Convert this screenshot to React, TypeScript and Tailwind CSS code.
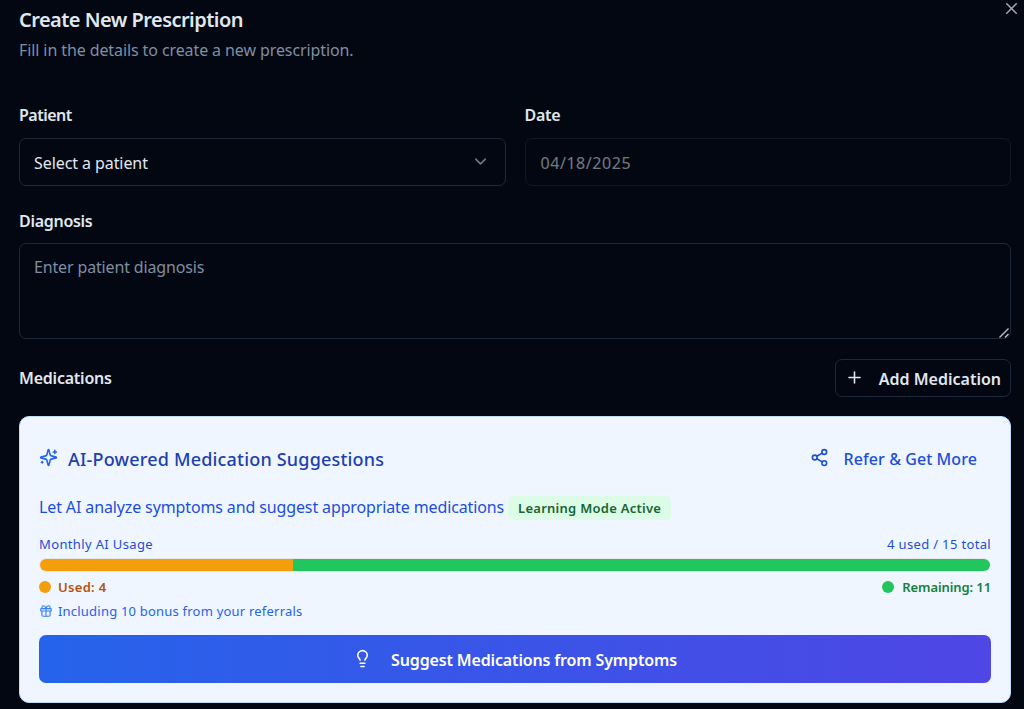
import { ChevronDown, Gift, Lightbulb, Plus, Share2, X } from "lucide-react";

function Sparkles({ className }: { className?: string }) {
  return (
    <svg viewBox="0 0 24 24" fill="none" stroke="currentColor" strokeWidth={2} strokeLinecap="round" strokeLinejoin="round" className={className}>
      <path d="M9.937 15.5A2 2 0 0 0 8.5 14.063l-6.135-1.582a.5.5 0 0 1 0-.962L8.5 9.936A2 2 0 0 0 9.937 8.5l1.582-6.135a.5.5 0 0 1 .963 0L14.063 8.5A2 2 0 0 0 15.5 9.937l6.135 1.581a.5.5 0 0 1 0 .964L15.5 14.063a2 2 0 0 0-1.437 1.437l-1.582 6.135a.5.5 0 0 1-.963 0z" />
      <path d="M20 3v4M22 5h-4M4 17v2M5 18H3" />
    </svg>
  );
}

const used = 4;
const total = 15;

function PrescriptionFields() {
  return (
    <>
      <div className="mt-[43px] grid grid-cols-2 gap-[19px]">
        <div>
          <div className="h-6 text-[16px] leading-6 font-semibold tracking-[-0.5px]">Patient</div>
          <button className="mt-[11px] flex h-12 w-full items-center justify-between rounded-[7px] border border-[#1d283a] pr-[15px] pl-[14px]">
            <span className="mt-[2px] text-[16px] leading-6 tracking-[-0.08px]">Select a patient</span>
            <ChevronDown className="mb-[2px] size-[19px] opacity-50" />
          </button>
        </div>
        <div>
          <div className="h-6 text-[16px] leading-6 font-semibold tracking-[-0.3px]">Date</div>
          <div className="mt-[11px] flex h-12 items-center rounded-[7px] border border-[#1d283a] px-[15px] opacity-50">
            <span className="mt-[2px] text-[16px] leading-6 tracking-[0.55px] text-[#e1e7ef]">04/18/2025</span>
          </div>
        </div>
      </div>
      <div className="mt-[23px] h-6 text-[16px] leading-6 font-semibold tracking-[-0.28px]">Diagnosis</div>
      <div className="relative mt-[10px] h-24">
        <textarea
          placeholder="Enter patient diagnosis"
          className="block h-24 w-full resize-none rounded-[7px] border border-[#1d283a] bg-transparent px-[14px] py-[11px] text-[16px] leading-6 tracking-[-0.15px] outline-none placeholder:text-[#7f8ea3]"
        />
        <svg viewBox="0 0 10 10" className="absolute right-[2px] bottom-[1px] size-[10px]" stroke="#c4c4c4" strokeWidth="1.4">
          <path d="M0.5 9.5 9.5 0.5M6 9.5 9.5 6" />
        </svg>
      </div>
    </>
  );
}

function UsageMeter() {
  return (
    <>
      <div className="mt-[15px] flex h-5 items-center justify-between text-[13px] text-[#1d4ed8]">
        <span className="tracking-[0.36px]">Monthly AI Usage</span>
        <span className="tracking-[0.34px]">{used} used / {total} total</span>
      </div>
      <div className="mt-[3px] flex h-[14px] overflow-hidden rounded-full border border-[#e5e7eb]">
        <div className="bg-[#f59e0b]" style={{ width: `${(used / total) * 100}%` }} />
        <div className="flex-1 bg-[#22c55e]" />
      </div>
      <div className="mt-[5px] flex h-5 items-center justify-between text-[13px] font-semibold">
        <div className="flex items-center gap-[7px] text-[#b45309]">
          <span className="size-3 rounded-full bg-[#f59e0b]" />
          <span className="mt-[2px] tracking-[0.3px]">Used: {used}</span>
        </div>
        <div className="flex items-center gap-2 text-[#15803d]">
          <span className="size-3 rounded-full bg-[#22c55e]" />
          <span className="mt-[2px] tracking-[-0.1px]">Remaining: {total - used}</span>
        </div>
      </div>
      <div className="mt-1 flex h-5 items-center gap-[5px] text-[13px] text-[#2563eb]">
        <Gift className="size-[14px] text-[#3b82f6]" />
        <span className="mt-[2px] tracking-[0.21px]">Including 10 bonus from your referrals</span>
      </div>
    </>
  );
}

function SuggestionCard() {
  return (
    <section className="mt-[19px] h-[287px] rounded-[10px] border border-[#bfdbfe] bg-[#eff6ff] px-[19px] pt-[23px]">
      <div className="flex h-[38px] items-center justify-between">
        <div className="flex items-center text-[#1e40af]">
          <Sparkles className="mb-[3px] size-[19px] text-[#2563eb]" />
          <span className="ml-[10px] text-[18px] leading-6 font-medium tracking-[0.19px]">AI-Powered Medication Suggestions</span>
        </div>
        <button className="mr-[14px] flex items-center text-[#1d4ed8]">
          <Share2 className="mb-[3px] size-[19px]" />
          <span className="ml-[15px] text-[16px] leading-6 font-medium tracking-[0.07px]">Refer &amp; Get More</span>
        </button>
      </div>
      <div className="mt-[18px] flex h-6 items-center">
        <span className="mb-[2px] text-[16px] leading-6 tracking-[-0.125px] text-[#1d4ed8]">Let AI analyze symptoms and suggest appropriate medications</span>
        <span className="ml-1 flex h-6 items-center rounded-[5px] bg-[#dcfce7] px-[10px] text-[13px] font-semibold text-[#166534]">
          <span className="mt-[2px] tracking-[0.26px]">Learning Mode Active</span>
        </span>
      </div>
      <UsageMeter />
      <button className="mt-[14px] flex h-12 w-full items-center justify-center rounded-[7px] bg-[linear-gradient(90deg,#2563eb,#4f46e5)] text-white">
        <Lightbulb className="mb-[2px] size-[19px]" />
        <span className="mt-[2px] ml-[19px] text-[16px] leading-6 font-semibold tracking-[-0.15px]">Suggest Medications from Symptoms</span>
      </button>
    </section>
  );
}

export default function App() {
  return (
    <main className="relative h-[709px] w-full overflow-hidden bg-[#030711] pt-2 pr-[13px] pl-[19px] font-['Noto_Sans',sans-serif] whitespace-nowrap text-[#e1e7ef]">
      <button aria-label="Close" className="absolute top-[-1px] right-[3px] opacity-70">
        <X className="size-[19px]" />
      </button>
      <h1 className="h-6 text-[20px] leading-6 font-semibold tracking-[-0.54px]">Create New Prescription</h1>
      <p className="mt-[6px] h-[22px] text-[16px] leading-6 tracking-[-0.1px] text-[#7f8ea3]">Fill in the details to create a new prescription.</p>
      <PrescriptionFields />
      <div className="mt-5 flex h-[38px] items-center justify-between">
        <span className="text-[16px] leading-6 font-semibold tracking-[-0.22px]">Medications</span>
        <button className="flex h-[38px] items-center rounded-[7px] border border-[#1d283a] pr-[9px] pl-[9px]">
          <Plus className="mb-[2px] size-[19px]" />
          <span className="mt-[2px] ml-[15px] text-[16px] leading-6 font-semibold">Add Medication</span>
        </button>
      </div>
      <SuggestionCard />
    </main>
  );
}
